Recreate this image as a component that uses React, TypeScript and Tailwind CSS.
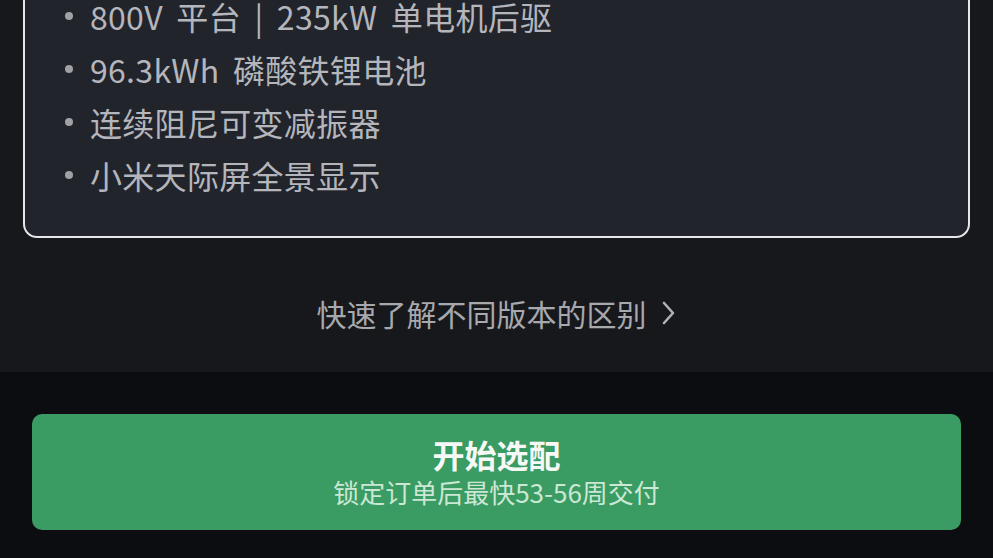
const FEATURES = [
  '800V 平台 | 235kW 单电机后驱',
  '96.3kWh 磷酸铁锂电池',
  '连续阻尼可变减振器',
  '小米天际屏全景显示',
]

export default function App() {
  return (
    <div
      className="w-[993px] h-[558px] overflow-hidden flex flex-col bg-[#0c0d10]"
      style={{ fontFamily: '"Noto Sans CJK SC", "Noto Sans", sans-serif' }}
    >
      {/* ── Version card + compare link ─────────────────────────── */}
      <div className="h-[372px] shrink-0 bg-[#17181c] px-[23px] flex flex-col">
        <div className="-mt-[24px] rounded-[14px] border-2 border-[#e6e7ea] bg-[#22242c] pt-[22px] pb-[45px] pl-[40px]">
          <ul className="flex flex-col gap-[21px]">
            {FEATURES.map((f) => (
              <li key={f} className="flex items-center h-[32px] leading-[32px] text-[32px] text-[#b4b6bc]">
                <span className="w-[8px] h-[8px] rounded-full bg-[#9fa1a7] mr-[17px] shrink-0" />
                <span className="whitespace-nowrap tracking-[0.3px] [word-spacing:6px]">{f}</span>
              </li>
            ))}
          </ul>
        </div>

        <div className="mt-[55px] h-[40px] flex items-center justify-center text-[#a8a9ad] text-[30px]">
          <span className="whitespace-nowrap">快速了解不同版本的区别</span>
          <svg width="18" height="26" viewBox="0 0 18 26" fill="none" stroke="#b0b1b5" strokeWidth="2.6" strokeLinecap="round" strokeLinejoin="round" className="ml-[12px]" aria-hidden>
            <path d="M5 3l9 10-9 10" />
          </svg>
        </div>
      </div>

      {/* ── Configure button ─────────────────────────────────────── */}
      <div className="flex-1 px-[32px] pt-[42px] pb-[28px]">
        <button
          type="button"
          className="w-full h-[116px] rounded-[10px] bg-[#3a9b63] flex flex-col items-center justify-center"
        >
          <span className="text-[32px] leading-[40px] font-bold text-[#f6f8f6]">开始选配</span>
          <span className="text-[26px] leading-[36px] text-[#cbe8d5]">锁定订单后最快53-56周交付</span>
        </button>
      </div>
    </div>
  )
}
